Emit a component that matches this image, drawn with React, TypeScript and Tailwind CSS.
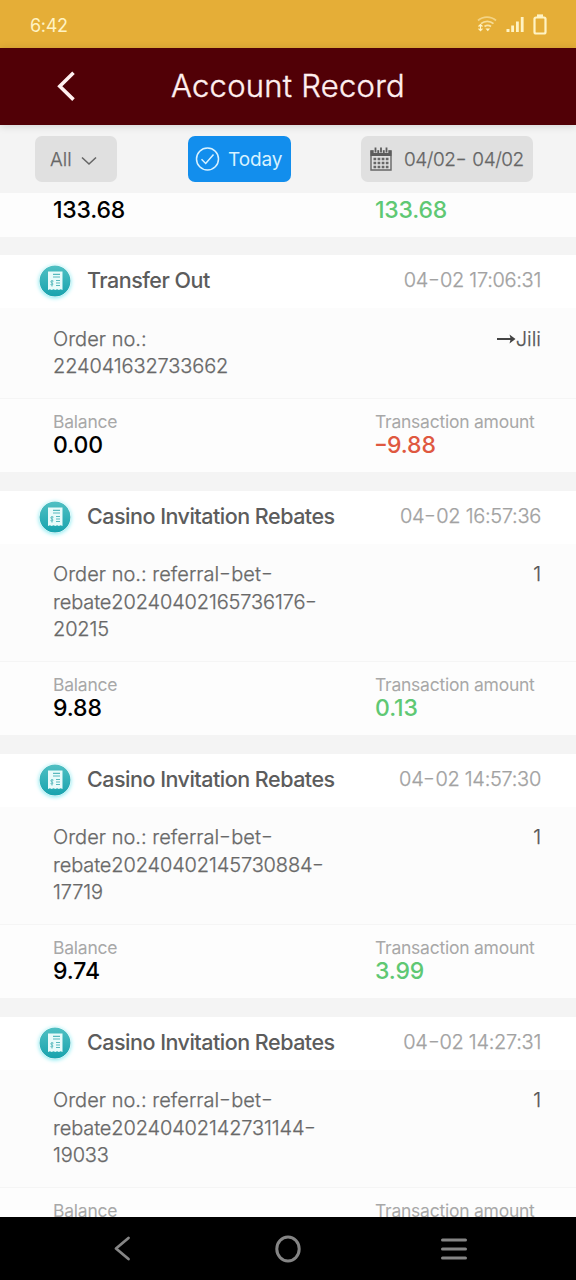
import clsx from "clsx";
import { Fragment } from "react";

type RecordItem = {
  title: string;
  time: string;
  order: string[];
  note: string;
  balance?: string;
  amount?: string;
};

const records: RecordItem[] = [
  {
    title: "Transfer Out",
    time: "04-02 17:06:31",
    order: ["Order no.:", "224041632733662"],
    note: "Jili",
    balance: "0.00",
    amount: "-9.88",
  },
  {
    title: "Casino Invitation Rebates",
    time: "04-02 16:57:36",
    order: ["Order no.: referral-bet-", "rebate20240402165736176-", "20215"],
    note: "1",
    balance: "9.88",
    amount: "0.13",
  },
  {
    title: "Casino Invitation Rebates",
    time: "04-02 14:57:30",
    order: ["Order no.: referral-bet-", "rebate20240402145730884-", "17719"],
    note: "1",
    balance: "9.74",
    amount: "3.99",
  },
  {
    title: "Casino Invitation Rebates",
    time: "04-02 14:27:31",
    order: ["Order no.: referral-bet-", "rebate20240402142731144-", "19033"],
    note: "1",
  },
];

// Widens the hyphens, which Inter sets quite short
function Dashed({ text }: { text: string }) {
  return text.split("-").map((part, i) => (
    <Fragment key={i}>
      {i > 0 && (
        <span className="inline-block w-3 origin-center -translate-y-px scale-x-130 text-center tracking-normal">-</span>
      )}
      {part}
    </Fragment>
  ));
}

function StatusBar() {
  return (
    <div className="flex h-12 shrink-0 items-center justify-between bg-[#e5ae37] pl-[30px] pr-[29px] text-[#fff3c4]">
      <span className="pt-0.5 text-[18px] tracking-[-0.3px]">6:42</span>
      <div className="flex items-center">
        <svg width="20" height="18" viewBox="0 0 20 18" fill="none" stroke="currentColor" strokeWidth="1.7">
          <path d="M1 5.5C6 1 14 1 19 5.5" opacity=".55" />
          <path d="M4 8.7C7.5 5.6 13 5.6 16.500 8.700" opacity=".7" />
          <path d="M7.500 11.500C9.500 10 12 10 14 11.500" opacity=".8" />
          <path d="M3.500 9.500v6M1.500 11.500l2-2 2 2M1.500 13.700l2 2 2-2" strokeWidth="1.200" />
          <path d="M8.500 13.500h4.500l-2.200 2.700z" fill="currentColor" stroke="none" />
        </svg>
        <svg className="ml-[9px]" width="19" height="17" viewBox="0 0 19 17" fill="currentColor">
          <path d="M.5 13h3v3h-3zM5.200 9.500h2.800V16H5.200zM10 5.500h2.800V16H10zM14.800 1h2.800v15h-2.800z" />
        </svg>
        <svg className="ml-2" width="14" height="21" viewBox="0 0 14 21" fill="none" stroke="currentColor" strokeWidth="2.200">
          <rect x="1.500" y="3.500" width="11" height="16" rx="1.500" />
          <path d="M4 1.700h6" strokeWidth="2.600" />
        </svg>
      </div>
    </div>
  );
}

function Header() {
  return (
    <header className="z-10 grid h-[77px] shrink-0 grid-cols-[133px_1fr_133px] items-center bg-[#510006] text-[#ffefef] shadow-[0_1px_8px_rgba(0,0,0,0.15)]">
      <svg className="ml-[57px] -mt-0.5" width="19" height="30" viewBox="0 0 19 30" fill="none" stroke="currentColor" strokeWidth="3.600">
        <path d="M16.500 1.800 2.800 15.300l13.700 13.300" />
      </svg>
      <h1 className="whitespace-nowrap text-center text-[31px] font-light tracking-[0.25px] [-webkit-text-stroke:0.4px_currentColor]">
        Account Record
      </h1>
    </header>
  );
}

function CalendarIcon() {
  return (
    <svg width="22" height="24" viewBox="0 0 22 24" fill="none">
      <path d="M1 4h20v19H1z" stroke="#666" strokeWidth="1.400" />
      <path d="M.5 3.500h21V9H.5z" fill="#5c5c5c" />
      <path d="M5.500 0v6M11 0v6M16.500 0v6" stroke="#e0e0e0" strokeWidth="3.600" />
      <path d="M5.500.5v5M11 .5v5M16.500.5v5" stroke="#5c5c5c" strokeWidth="1.800" />
      <path
        d="M3.500 12h15M3.500 16h15M3.500 20h15"
        stroke="#666"
        strokeWidth="2.500"
        strokeDasharray="2.700 1.400"
      />
    </svg>
  );
}

function Filters() {
  return (
    <div className="flex h-[68px] shrink-0 items-start bg-[#f4f4f4] pl-[35px] pt-[11px] text-[19px] font-light text-[#666] [-webkit-text-stroke:0.25px_currentColor]">
      <button className="flex h-[46px] w-[82px] items-center rounded-[7px] bg-[#e0e0e0] pl-[15px]">
        <span className="pt-0.5">All</span>
        <svg className="ml-[9px] mt-[3px]" width="16" height="10" viewBox="0 0 16 10" fill="none" stroke="#666" strokeWidth="1.600">
          <path d="m1 1.500 7 6.500 7-6.500" />
        </svg>
      </button>
      <button className="ml-[71px] flex h-[46px] w-[103px] items-center rounded-[7px] bg-[#128eed] pl-[7px] font-normal text-[#d8f2ff] [-webkit-text-stroke:0]">
        <svg width="25" height="24" viewBox="0 0 24 24" fill="none" stroke="currentColor" strokeWidth="1.500">
          <circle cx="12" cy="12" r="11" />
          <path d="m6 12.300 4.200 4.200 7.800-9" />
        </svg>
        <span className="ml-2 pt-0.5 tracking-[-0.1px]">Today</span>
      </button>
      <button className="ml-[70px] flex h-[46px] w-[172px] items-center rounded-[7px] bg-[#e0e0e0] pl-[9px]">
        <CalendarIcon />
        <span className="ml-3 whitespace-nowrap pt-0.5 tracking-[-0.45px]">
          <Dashed text="04/02- 04/02" />
        </span>
      </button>
    </div>
  );
}

function ReceiptIcon() {
  return (
    <svg className="-mt-px rounded-full shadow-[0_1px_4px_#7fe9f0]" width="32" height="32" viewBox="0 0 32 32" fill="none">
      <defs>
        <linearGradient id="teal" x1="0" y1="0" x2="0" y2="1">
          <stop offset="0" stopColor="#4fc0c3" />
          <stop offset="1" stopColor="#18a3ae" />
        </linearGradient>
      </defs>
      <circle cx="16" cy="16" r="15.500" fill="url(#teal)" />
      <path d="M9 6.500h14.500V25l-1.800-.8-1.800.8-1.800-.8-1.800.8-1.800-.8-1.800.8-1.800-.8L9 25z" fill="#e9fbfa" />
      <path d="M14 9.300h7M14 12h7M17 15.500h4M17 18h4M17 20.500h4" stroke="#58b9bd" strokeWidth="1.200" />
      <path d="M14.500 16.200c-3-1-3.500 1-1.700 1.700 2 .8 1.300 2.600-1.300 1.700M13 15v6.500" stroke="#58b9bd" strokeWidth="1" />
    </svg>
  );
}

function RecordCard({ item }: { item: RecordItem }) {
  const isTransfer = item.title === "Transfer Out";

  return (
    <article className="mt-[18.5px] shrink-0 text-[20px] font-light">
      <div className="flex h-[53px] items-center bg-white pl-[39px] pr-[35px]">
        <ReceiptIcon />
        <h2 className="ml-4 pb-0.5 text-[21.500px] font-medium tracking-[-0.5px] text-[#5c5c5c]">{item.title}</h2>
        <time className="ml-auto whitespace-nowrap pb-[3px] tracking-[-0.3px] text-[#a2a2a2] [-webkit-text-stroke:0.25px_currentColor]">
          <Dashed text={item.time} />
        </time>
      </div>

      <div className="flex justify-between border-b border-[#f5f5f5] bg-[#fcfcfc] pb-[17px] pl-[53px] pr-[35px] pt-[17.5px] leading-[27.5px] text-[#686868] [-webkit-text-stroke:0.25px_currentColor]">
        <div className="whitespace-nowrap">
          {item.order.map((line) => (
            <div
              key={line}
              className={clsx("h-[27.5px]", line.startsWith("Order") ? "tracking-[0.03px]" : "tracking-[-0.13px]")}
            >
              <Dashed text={line} />
            </div>
          ))}
        </div>
        <div className="flex h-[27.5px] items-center text-[#555]">
          {isTransfer && (
            <svg width="19" height="12" viewBox="0 0 19 12" fill="none">
              <path d="M0 6h14" stroke="#444" strokeWidth="2" />
              <path d="m12.500 1.500 6 4.500-6 4.500 1.200-4.500z" fill="#444" />
            </svg>
          )}
          {item.note}
        </div>
      </div>

      <div className="grid h-[73.5px] grid-cols-[322px_1fr] bg-[#fdfdfd] pl-[53px] pt-[11.5px]">
        <Amount label="Balance" value={item.balance} color="text-black" />
        <Amount
          label="Transaction amount"
          value={item.amount}
          color={item.amount?.startsWith("-") ? "text-[#df5840]" : "text-[#5fc873]"}
        />
      </div>
    </article>
  );
}

function Amount({ label, value, color }: { label: string; value?: string; color: string }) {
  return (
    <div>
      <div className="whitespace-nowrap text-[17.500px] font-normal leading-[23px] tracking-[-0.24px] text-[#a8a8a8]">
        {label}
      </div>
      {value && (
        <div className={clsx("text-[23px] font-medium leading-[25px] tracking-[-0.1px]", color)}>
          <Dashed text={value} />
        </div>
      )}
    </div>
  );
}

function NavigationBar() {
  return (
    <nav className="flex h-[63px] shrink-0 items-center bg-black pl-[113px] text-[#858585]">
      <svg width="19" height="26" viewBox="0 0 19 26" fill="none" stroke="currentColor" strokeWidth="2.800" strokeLinecap="round" strokeLinejoin="round">
        <path d="M15.500 2 3 12.500 15.500 23" />
      </svg>
      <svg className="ml-[143px]" width="26" height="28" viewBox="0 0 26 28" fill="none" stroke="currentColor" strokeWidth="3">
        <ellipse cx="13" cy="14" rx="11.200" ry="12" />
      </svg>
      <svg className="ml-[139px]" width="28" height="24" viewBox="0 0 28 24" stroke="currentColor" strokeWidth="3" strokeLinecap="round">
        <path d="M2.500 3h23M2.500 12h23M2.500 21h23" />
      </svg>
    </nav>
  );
}

export default function App() {
  return (
    <div className="flex h-[1280px] w-[576px] flex-col overflow-hidden bg-[#f4f4f4] font-['Inter','Liberation_Sans',sans-serif]">
      <StatusBar />
      <Header />
      <Filters />

      <main className="flex min-h-0 flex-1 flex-col overflow-hidden">
        {/* Tail of the record scrolled under the filters */}
        <div className="grid h-[43.5px] shrink-0 grid-cols-[322px_1fr] bg-[#fdfdfd] pl-[53px] pt-[5px] text-[23px] font-medium leading-[25px] tracking-[-0.2px]">
          <div>133.68</div>
          <div className="text-[#5fc873]">133.68</div>
        </div>

        {records.map((item) => (
          <RecordCard key={item.time} item={item} />
        ))}
      </main>

      <NavigationBar />
    </div>
  );
}
